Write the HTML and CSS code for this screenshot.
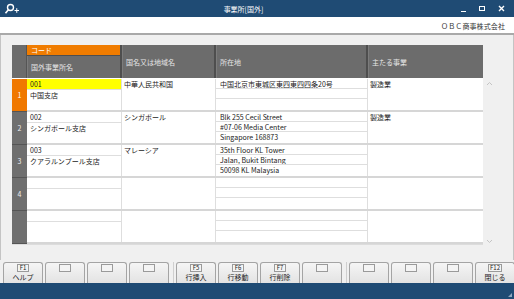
FILE: index.html
```html
<!DOCTYPE html>
<html lang="ja">
<head>
    <meta charset="UTF-8">
    <title>事業所[国外]</title>
    <link rel="stylesheet" href="styles.css">
</head>
<body>
    <div class="window">
        <header class="titlebar">
            <svg class="app-icon" width="16" height="12" viewBox="0 0 16 12">
                <circle cx="6.5" cy="4.5" r="3" fill="none" stroke="#fff" stroke-width="1.4"/>
                <line x1="4.6" y1="6.6" x2="1.5" y2="10.2" stroke="#fff" stroke-width="1.6"/>
                <line x1="10.5" y1="7.5" x2="15" y2="7.5" stroke="#fff" stroke-width="1"/>
                <line x1="12.75" y1="5.2" x2="12.75" y2="9.8" stroke="#fff" stroke-width="1"/>
            </svg>
            <span class="title">事業所[国外]</span>
            <div class="win-controls">
                <span class="ctl-min"></span>
                <span class="ctl-max"></span>
                <svg class="ctl-close" width="7" height="7" viewBox="0 0 7 7">
                    <path d="M1 1L6 6M6 1L1 6" stroke="#fff" stroke-width="1.4"/>
                </svg>
            </div>
        </header>

        <div class="company">ＯＢＣ商事株式会社</div>

        <main class="content">
            <div class="sheet">
                <div class="head">
                    <div class="h-num"></div>
                    <div class="h-col h-stack">
                        <div class="h-code">コード</div>
                        <div class="h-name">国外事業所名</div>
                    </div>
                    <div class="h-col">国名又は地域名</div>
                    <div class="h-col">所在地</div>
                    <div class="h-col h-last">主たる事業</div>
                </div>

                <div class="row">
                    <div class="num active">1</div>
                    <div class="c-office">
                        <div class="sub code current">001</div>
                        <div class="sub name">中国支店</div>
                    </div>
                    <div class="c-country"><div class="sub">中華人民共和国</div></div>
                    <div class="c-addr">
                        <div class="sub">中国北京市東城区東四東四四条20号</div>
                        <div class="sub"></div>
                        <div class="sub"></div>
                    </div>
                    <div class="c-biz"><div class="sub">製造業</div></div>
                </div>

                <div class="row">
                    <div class="num">2</div>
                    <div class="c-office">
                        <div class="sub code">002</div>
                        <div class="sub name">シンガポール支店</div>
                    </div>
                    <div class="c-country"><div class="sub">シンガポール</div></div>
                    <div class="c-addr">
                        <div class="sub">Blk 255 Cecil Street</div>
                        <div class="sub">#07-06 Media Center</div>
                        <div class="sub">Singapore 168873</div>
                    </div>
                    <div class="c-biz"><div class="sub">製造業</div></div>
                </div>

                <div class="row">
                    <div class="num">3</div>
                    <div class="c-office">
                        <div class="sub code">003</div>
                        <div class="sub name">クアラルンプール支店</div>
                    </div>
                    <div class="c-country"><div class="sub">マレーシア</div></div>
                    <div class="c-addr">
                        <div class="sub">35th Floor KL Tower</div>
                        <div class="sub">Jalan, Bukit Bintang</div>
                        <div class="sub">50098 KL Malaysia</div>
                    </div>
                    <div class="c-biz"><div class="sub"></div></div>
                </div>

                <div class="row">
                    <div class="num">4</div>
                    <div class="c-office">
                        <div class="sub code"></div>
                        <div class="sub name"></div>
                    </div>
                    <div class="c-country"><div class="sub"></div></div>
                    <div class="c-addr">
                        <div class="sub"></div>
                        <div class="sub"></div>
                        <div class="sub"></div>
                    </div>
                    <div class="c-biz"><div class="sub"></div></div>
                </div>

                <div class="row">
                    <div class="num"></div>
                    <div class="c-office">
                        <div class="sub code"></div>
                        <div class="sub name"></div>
                    </div>
                    <div class="c-country"><div class="sub"></div></div>
                    <div class="c-addr">
                        <div class="sub"></div>
                        <div class="sub"></div>
                        <div class="sub"></div>
                    </div>
                    <div class="c-biz"><div class="sub"></div></div>
                </div>
            </div>

            <div class="vscroll">
                <svg width="7" height="5" viewBox="0 0 7 5"><path d="M1 4L3.5 1.5L6 4" fill="none" stroke="#c4c4c4" stroke-width="1"/></svg>
                <svg width="7" height="5" viewBox="0 0 7 5"><path d="M1 1L3.5 3.5L6 1" fill="none" stroke="#c4c4c4" stroke-width="1"/></svg>
            </div>
        </main>

        <nav class="fkeys">
            <div class="fgroup">
                <div class="fkey"><span class="cap">F1</span><span class="label">ヘルプ</span></div>
                <div class="fkey"><span class="cap"></span></div>
                <div class="fkey"><span class="cap"></span></div>
                <div class="fkey"><span class="cap"></span></div>
            </div>
            <div class="fgroup">
                <div class="fkey"><span class="cap">F5</span><span class="label">行挿入</span></div>
                <div class="fkey"><span class="cap">F6</span><span class="label">行移動</span></div>
                <div class="fkey"><span class="cap">F7</span><span class="label">行削除</span></div>
                <div class="fkey"><span class="cap"></span></div>
            </div>
            <div class="fgroup">
                <div class="fkey"><span class="cap"></span></div>
                <div class="fkey"><span class="cap"></span></div>
                <div class="fkey"><span class="cap"></span></div>
                <div class="fkey"><span class="cap">F12</span><span class="label">閉じる</span></div>
            </div>
        </nav>

        <footer class="statusbar">
            <svg class="grip" width="6" height="6" viewBox="0 0 6 6">
                <path d="M5 1V5H1Z" fill="#8fa8c0"/>
            </svg>
        </footer>
    </div>
</body>
</html>
```

FILE: styles.css
```css
* {
    margin: 0;
    padding: 0;
    box-sizing: border-box;
}

body {
    font-family: "Noto Sans CJK JP", "Noto Sans", sans-serif;
    font-size: 7px;
    color: #222;
    background: #f0f0f0;
}

.window {
    width: 514px;
    height: 299px;
    display: flex;
    flex-direction: column;
    background: #f0f0f0;
    overflow: hidden;
}

/* title bar */
.titlebar {
    flex: none;
    height: 17px;
    background: #1f4b74;
    color: #fff;
    display: flex;
    align-items: center;
    padding: 0 9px 0 4px;
}

.app-icon {
    flex: none;
}

.title {
    flex: 1;
    text-align: center;
    font-size: 7px;
    padding-left: 6px;
}

.win-controls {
    display: flex;
    align-items: center;
    gap: 13px;
}

.ctl-min {
    width: 5px;
    height: 1px;
    margin-top: 5px;
    background: #fff;
}

.ctl-max {
    width: 6px;
    height: 5px;
    border: 1px solid #fff;
}

.company {
    flex: none;
    height: 18px;
    background: #fff;
    border-bottom: 2px solid #a9a9a9;
    text-align: right;
    padding: 4px 9px 0 0;
    font-size: 7px;
    line-height: 10px;
    color: #333;
    letter-spacing: 0.1px;
}

/* grid area */
.content {
    flex: 1;
    min-height: 0;
    display: flex;
    align-items: flex-start;
    padding: 10px 0 0 11px;
    border-left: 1px solid #c4c4c4;
    border-right: 1px solid #c4c4c4;
}

.sheet {
    flex: none;
    width: 471px;
    background: #fff;
    border-bottom: 1px solid #dcdcdc;
}

.head,
.row {
    display: grid;
    grid-template-columns: 15px 95px 94px 152px 115px;
}

.head {
    height: 34px;
    background: #6c6c6c;
    color: #e6e6e6;
    border-bottom: 1px solid #fff;
}

.h-num {
    border-right: 1px solid #555;
}

.h-col {
    display: flex;
    align-items: center;
    padding-left: 4px;
    border-right: 2px solid #4e4e4e;
    box-shadow: inset 1px 0 0 #7c7c7c;
}

.h-last {
    border-right: 0;
}

.h-stack {
    flex-direction: column;
    align-items: stretch;
    padding-left: 0;
}

.h-code {
    height: 11px;
    background: #f07c00;
    color: #fff;
    line-height: 11px;
    padding-left: 4px;
    border-bottom: 1px solid #4e4e4e;
}

.h-name {
    flex: 1;
    display: flex;
    align-items: center;
    padding-left: 4px;
}

.row {
    height: 33px;
    border-bottom: 2px solid #d6d6d6;
}

.num {
    background: #6f6f6f;
    color: #eee;
    display: flex;
    align-items: center;
    justify-content: center;
    border-bottom: 1px solid #555;
    margin-bottom: -2px;
}

.num.active {
    background: #f07800;
    color: #fff;
}

.c-office,
.c-country,
.c-addr {
    border-right: 1px solid #dedede;
    display: flex;
    flex-direction: column;
}

.c-biz {
    display: flex;
    flex-direction: column;
}

.sub {
    height: 10px;
    line-height: 10px;
    padding-left: 3px;
    white-space: nowrap;
    overflow: hidden;
    color: #1a1a1a;
}

.c-addr .sub {
    padding-left: 4px;
    border-bottom: 1px solid #dedede;
}

.c-addr .sub:last-child {
    border-bottom: 0;
}

.c-office .code {
    height: 11px;
    border-bottom: 1px solid #dedede;
}

.c-office .code.current {
    background: #ffff00;
}

.c-country .sub,
.c-biz .sub {
    padding-left: 2px;
}

.vscroll {
    flex: none;
    width: 13px;
    height: 165px;
    margin-top: 34px;
    display: flex;
    flex-direction: column;
    justify-content: space-between;
    align-items: center;
    padding: 2px 0 0;
}

/* function keys */
.fkeys {
    flex: none;
    height: 23px;
    display: flex;
    padding: 2px 0 0 3px;
    gap: 5px;
}

.fgroup {
    display: flex;
    gap: 2px;
}

.fgroup + .fgroup {
    border-left: 1px solid #cfcfcf;
    padding-left: 2px;
    margin-left: -1px;
}

.fkey {
    width: 40px;
    height: 21px;
    border: 1px solid #a4a4a4;
    border-bottom: 0;
    border-radius: 3px 3px 0 0;
    background: linear-gradient(#f5f5f5, #e3e3e3);
    display: flex;
    flex-direction: column;
    align-items: center;
    padding-top: 1px;
}

.cap {
    min-width: 12px;
    height: 8px;
    padding: 0 1px;
    border: 1px solid #9a9a9a;
    background: #f4f4f4;
    font-size: 6px;
    line-height: 6px;
    text-align: center;
    color: #222;
}

.label {
    font-size: 7px;
    line-height: 9px;
    margin-top: 1px;
    color: #222;
}

.statusbar {
    flex: none;
    height: 16px;
    background: #1f4b74;
    display: flex;
    justify-content: flex-end;
    align-items: flex-end;
    padding: 0 1px 1px 0;
}
```
